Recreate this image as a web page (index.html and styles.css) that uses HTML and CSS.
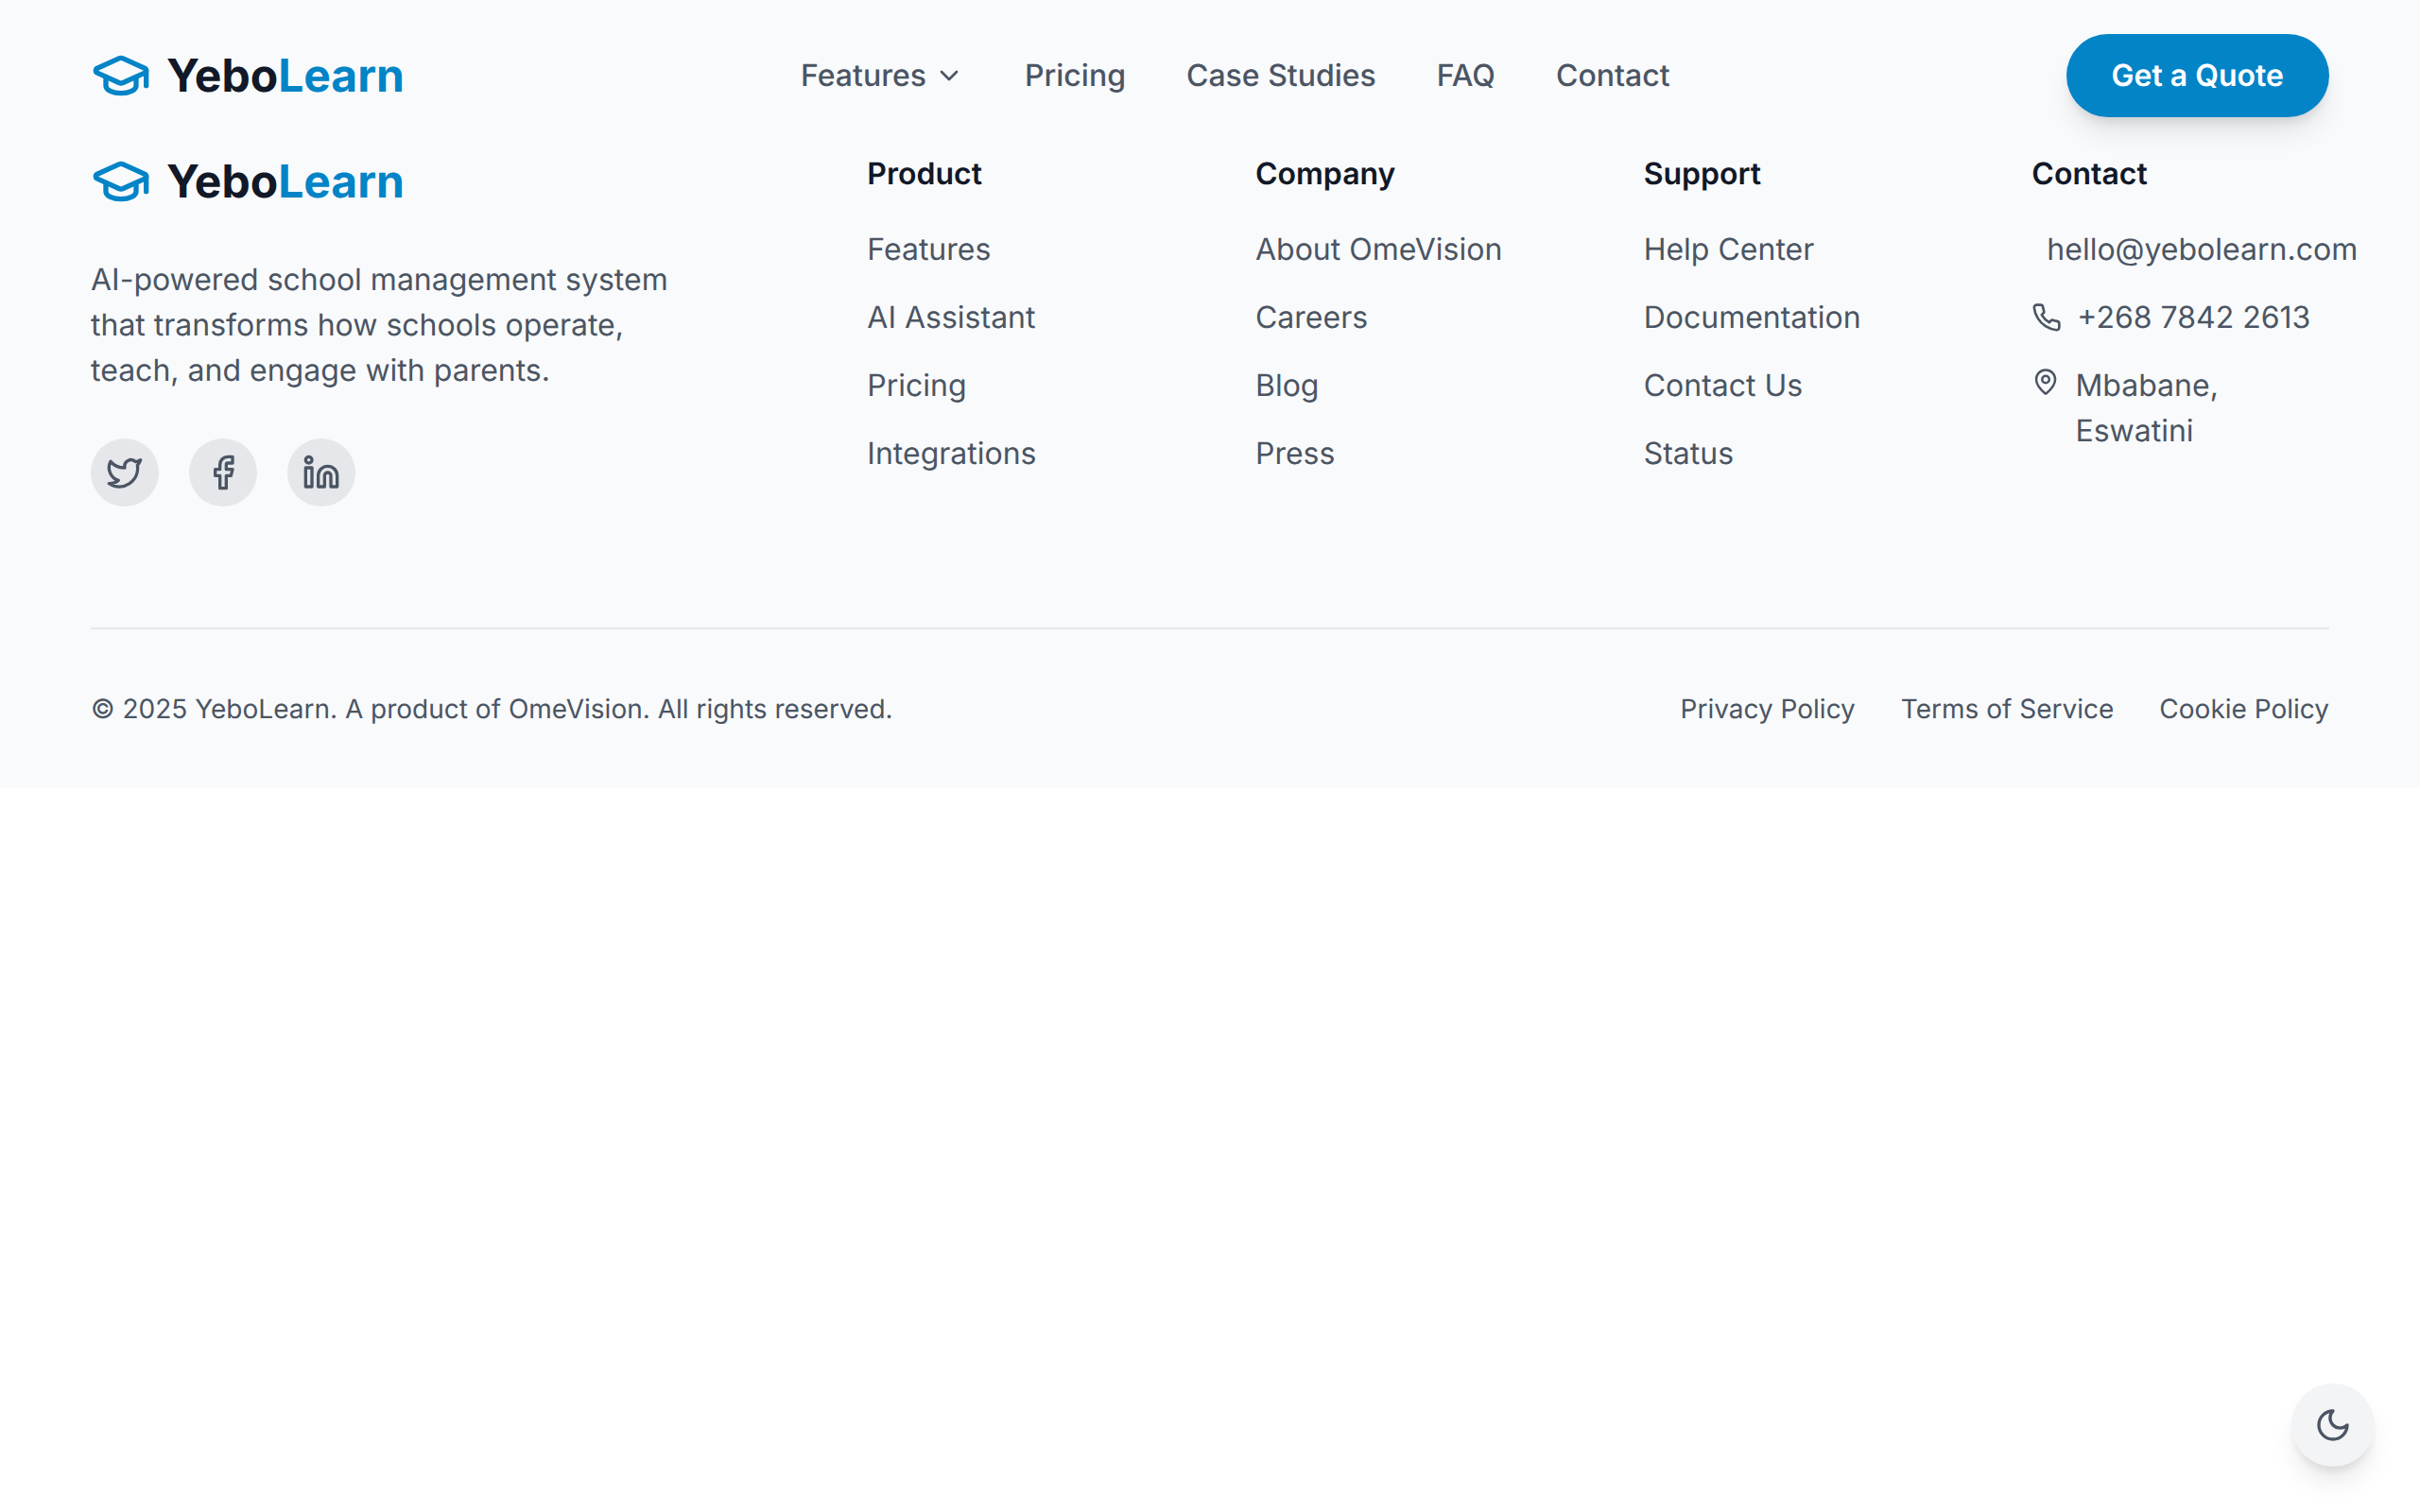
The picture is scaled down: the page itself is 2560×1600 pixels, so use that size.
FILE: index.html
```html
<!DOCTYPE html>
<html lang="en">
<head>
<meta charset="utf-8">
<meta name="viewport" content="width=device-width, initial-scale=1">
<title>YeboLearn</title>
<link rel="stylesheet" href="styles.css">
</head>
<body>
<svg class="sprite" aria-hidden="true">
  <symbol id="cap" viewBox="0 0 24 24">
    <path d="M21.42 10.922a1 1 0 0 0-.019-1.838L12.83 5.18a2 2 0 0 0-1.66 0L2.6 9.08a1 1 0 0 0 0 1.832l8.57 3.908a2 2 0 0 0 1.66 0z"/>
    <path d="M22 10v6"/>
    <path d="M6 12.5V16a6 3 0 0 0 12 0v-3.5"/>
  </symbol>
</svg>

<header class="header">
  <a class="logo" href="#"><svg class="icon logo-icon" aria-hidden="true"><use href="#cap"/></svg><span>Yebo<span class="accent">Learn</span></span></a>
  <nav class="nav" aria-label="Main">
    <button class="nav-link" type="button">Features
      <svg class="icon icon-sm" viewBox="0 0 24 24" aria-hidden="true"><path d="m6 9 6 6 6-6"/></svg>
    </button>
    <a class="nav-link" href="#">Pricing</a>
    <a class="nav-link" href="#">Case Studies</a>
    <a class="nav-link" href="#">FAQ</a>
    <a class="nav-link" href="#">Contact</a>
  </nav>
  <button class="quote" type="button">Get a Quote</button>
</header>

<footer class="footer">
  <div class="columns">
    <div class="brand">
      <a class="logo" href="#"><svg class="icon logo-icon" aria-hidden="true"><use href="#cap"/></svg><span>Yebo<span class="accent">Learn</span></span></a>
      <p class="tagline">AI-powered school management system that transforms how schools operate, teach, and engage with parents.</p>
      <div class="socials">
        <a class="social" href="#" aria-label="Twitter"><svg class="icon icon-md" viewBox="0 0 24 24"><path d="M22 4s-.7 2.1-2 3.4c1.6 10-9.4 17.3-18 11.6 2.2.1 4.4-.6 6-2C3 15.500.5 9.600 3 5c2.200 2.600 5.600 4.100 9 4-.9-4.200 4-6.600 7-3.800 1.100 0 3-1.200 3-1.200z"/></svg></a>
        <a class="social" href="#" aria-label="Facebook"><svg class="icon icon-md" viewBox="0 0 24 24"><path d="M18 2h-3a5 5 0 0 0-5 5v3H7v4h3v8h4v-8h3l1-4h-4V7a1 1 0 0 1 1-1h3z"/></svg></a>
        <a class="social" href="#" aria-label="LinkedIn"><svg class="icon icon-md" viewBox="0 0 24 24"><path d="M16 8a6 6 0 0 1 6 6v7h-4v-7a2 2 0 0 0-4 0v7h-4v-7a6 6 0 0 1 6-6z"/><rect x="2" y="9" width="4" height="12"/><circle cx="4" cy="4" r="2"/></svg></a>
      </div>
    </div>
    <div>
      <h3 class="heading">Product</h3>
      <ul class="links">
        <li><a href="#">Features</a></li>
        <li><a href="#">AI Assistant</a></li>
        <li><a href="#">Pricing</a></li>
        <li><a href="#">Integrations</a></li>
      </ul>
    </div>
    <div>
      <h3 class="heading">Company</h3>
      <ul class="links">
        <li><a href="#">About OmeVision</a></li>
        <li><a href="#">Careers</a></li>
        <li><a href="#">Blog</a></li>
        <li><a href="#">Press</a></li>
      </ul>
    </div>
    <div>
      <h3 class="heading">Support</h3>
      <ul class="links">
        <li><a href="#">Help Center</a></li>
        <li><a href="#">Documentation</a></li>
        <li><a href="#">Contact Us</a></li>
        <li><a href="#">Status</a></li>
      </ul>
    </div>
    <div>
      <h3 class="heading">Contact</h3>
      <ul class="links">
        <li><a class="contact" href="mailto:hello@yebolearn.com"><svg class="icon icon-sm" viewBox="0 0 24 24" aria-hidden="true"><rect x="2" y="4" width="20" height="16" rx="2"/><path d="m22 7-10 6L2 7"/></svg><span>hello@yebolearn.com</span></a></li>
        <li><a class="contact" href="tel:+26878422613"><svg class="icon icon-sm" viewBox="0 0 24 24" aria-hidden="true"><path d="M22 16.920v3a2 2 0 0 1-2.180 2 19.790 19.790 0 0 1-8.630-3.070 19.500 19.500 0 0 1-6-6 19.790 19.790 0 0 1-3.070-8.670A2 2 0 0 1 4.110 2h3a2 2 0 0 1 2 1.720 12.840 12.840 0 0 0 .7 2.810 2 2 0 0 1-.45 2.110L8.090 9.910a16 16 0 0 0 6 6l1.270-1.270a2 2 0 0 1 2.110-.45 12.840 12.840 0 0 0 2.810.7A2 2 0 0 1 22 16.920z"/></svg><span>+268 7842 2613</span></a></li>
        <li class="contact contact-top"><svg class="icon icon-sm" viewBox="0 0 24 24" aria-hidden="true"><path d="M20 10c0 4.993-5.539 10.193-7.399 11.799a1 1 0 0 1-1.202 0C9.539 20.193 4 14.993 4 10a8 8 0 0 1 16 0"/><circle cx="12" cy="10" r="3"/></svg><span>Mbabane, Eswatini</span></li>
      </ul>
    </div>
  </div>
  <div class="bottom">
    <p>© 2025 YeboLearn. A product of OmeVision. All rights reserved.</p>
    <div class="legal">
      <a href="#">Privacy Policy</a>
      <a href="#">Terms of Service</a>
      <a href="#">Cookie Policy</a>
    </div>
  </div>
</footer>

<button class="theme" type="button" aria-label="Toggle dark mode"><svg class="icon icon-md" viewBox="0 0 24 24"><path d="M12 3a6 6 0 0 0 9 9 9 9 0 1 1-9-9Z"/></svg></button>
</body>
</html>
```
FILE: styles.css
```css
* {
  box-sizing: border-box;
  margin: 0;
  padding: 0;
}

body {
  background: #fff;
  color: #4b5563;
  font-family: Inter, "Liberation Sans", sans-serif;
  font-size: 32px;
  line-height: 48px;
  text-rendering: geometricPrecision;
}

a {
  color: inherit;
  text-decoration: none;
}

button {
  border: 0;
  font: inherit;
  color: inherit;
  text-rendering: inherit;
  cursor: pointer;
}

ul {
  list-style: none;
}

.sprite {
  display: none;
}

.icon {
  display: block;
  fill: none;
  stroke: currentColor;
  stroke-width: 2;
  stroke-linecap: round;
  stroke-linejoin: round;
}

.icon-sm {
  width: 32px;
  height: 32px;
  min-width: 0;
}

.icon-md {
  width: 40px;
  height: 40px;
}

.header,
.footer {
  padding: 0 96px;
  background: #f9fafc;
}

.header {
  position: sticky;
  top: 0;
  z-index: 1;
  display: flex;
  align-items: center;
  justify-content: space-between;
  padding-block: 36px;
}

.logo {
  display: flex;
  align-items: center;
  gap: 16px;
  width: max-content;
  color: #111827;
  font-size: 48px;
  font-weight: 700;
  line-height: 64px;
}

.logo-icon {
  width: 64px;
  height: 64px;
  color: #0284c7;
}

.accent {
  color: #0284c7;
}

.nav {
  display: flex;
  gap: 64px;
}

.nav-link {
  display: flex;
  align-items: center;
  gap: 8px;
  background: none;
  font-weight: 500;
}

.quote {
  padding: 20px 48px;
  border-radius: 44px;
  background: #0284c7;
  color: #fff;
  font-weight: 600;
  box-shadow: 0 20px 30px -6px rgba(0, 0, 0, 0.1), 0 8px 12px -4px rgba(0, 0, 0, 0.1);
}

.columns {
  display: grid;
  grid-template-columns: repeat(6, minmax(0, 1fr));
  gap: 96px;
  padding-bottom: 128px;
}

.brand {
  grid-column: span 2;
}

.tagline {
  max-width: 640px;
  margin: 48px 0;
}

.socials {
  display: flex;
  gap: 32px;
}

.social {
  display: grid;
  place-items: center;
  width: 72px;
  height: 72px;
  border-radius: 50%;
  background: #e5e7eb;
}

.heading {
  margin-bottom: 32px;
  color: #111827;
  font-size: 32px;
  font-weight: 600;
}

.links {
  display: flex;
  flex-direction: column;
  gap: 24px;
}

.contact {
  display: flex;
  align-items: center;
  gap: 16px;
}

.contact-top {
  align-items: flex-start;
}

.contact-top .icon {
  margin-top: 4px;
}

.bottom {
  display: flex;
  justify-content: space-between;
  padding: 64px 0;
  border-top: 2px solid #e5e7eb;
  font-size: 28px;
  line-height: 40px;
}

.legal {
  display: flex;
  gap: 48px;
}

.theme {
  position: fixed;
  right: 48px;
  bottom: 48px;
  display: grid;
  place-items: center;
  width: 88px;
  height: 88px;
  border-radius: 50%;
  background: #f3f4f6;
  box-shadow: 0 20px 30px -6px rgba(0, 0, 0, 0.1), 0 8px 12px -4px rgba(0, 0, 0, 0.1);
}
```
